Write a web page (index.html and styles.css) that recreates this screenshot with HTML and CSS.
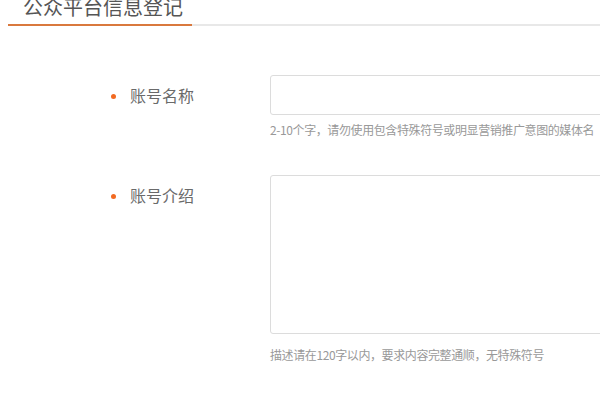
FILE: index.html
```html
<!DOCTYPE html>
<html lang="zh-CN">

<head>
  <meta charset="UTF-8">
  <meta name="viewport" content="width=device-width, initial-scale=1.0">
  <title>公众平台信息登记</title>
  <link rel="stylesheet" href="styles.css">
</head>

<body>
  <div class="page">
    <div class="tabs">
      <span class="tab active">公众平台信息登记</span>
    </div>

    <form class="form">
      <div class="form-row">
        <label class="form-label" for="name">账号名称</label>
        <div class="form-field">
          <input class="input" id="name" type="text">
          <p class="hint">2-10个字，请勿使用包含特殊符号或明显营销推广意图的媒体名</p>
        </div>
      </div>

      <div class="form-row">
        <label class="form-label" for="intro">账号介绍</label>
        <div class="form-field">
          <textarea class="textarea" id="intro"></textarea>
          <p class="hint hint-far">描述请在120字以内，要求内容完整通顺，无特殊符号</p>
        </div>
      </div>
    </form>
  </div>
</body>

</html>
```

FILE: styles.css
```css
html,
body {
  margin: 0;
  overflow: hidden;
}

body {
  background: #fff;
  color: #666;
  font-family: "Noto Sans CJK SC", "Noto Sans", sans-serif;
}

.page {
  margin-top: -11px;
  padding-left: 8px;
}

.tabs {
  border-bottom: 2px solid #e8e8e8;
  display: flex;
}

.tab {
  box-sizing: border-box;
  color: #555;
  font-size: 20px;
  line-height: 35px;
  padding-left: 15px;
  width: 184px;
}

.tab.active {
  border-bottom: 2px solid #d9793e;
  margin-bottom: -2px;
}

.form {
  margin-top: 49px;
}

.form-row {
  display: grid;
  grid-template-columns: 262px 360px;
  margin-bottom: 36px;
}

.form-label {
  align-items: center;
  align-self: start;
  color: #6a6a6a;
  display: flex;
  font-size: 16px;
  gap: 14px;
  height: 40px;
  padding-bottom: 2px;
  padding-left: 103px;
}

.form-label::before {
  background: #f26a22;
  border-radius: 50%;
  content: "";
  height: 5px;
  margin-top: 3px;
  width: 5px;
}

.input,
.textarea {
  border: 1px solid #dcdcdc;
  border-radius: 3px;
  box-sizing: border-box;
  display: block;
  font: inherit;
  margin: 0;
  outline: none;
  width: 100%;
}

.input {
  height: 40px;
}

.textarea {
  height: 159px;
  resize: none;
}

.hint {
  color: #999;
  font-size: 12px;
  letter-spacing: -0.4px;
  line-height: 18px;
  margin: 6px 0 0;
  white-space: nowrap;
}

.hint-far {
  margin-top: 12px;
}
```
